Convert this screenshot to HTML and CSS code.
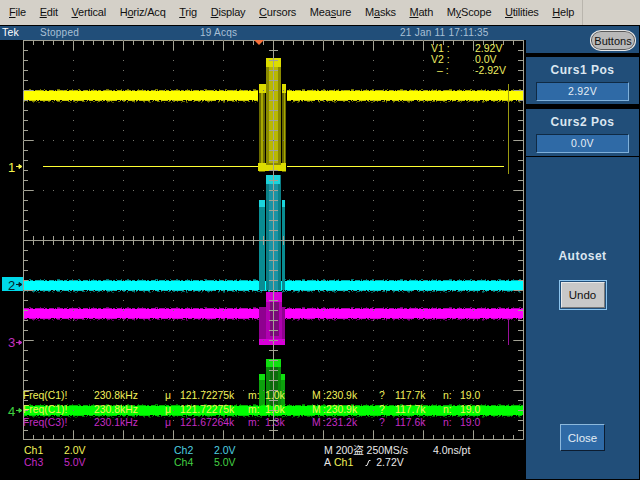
FILE: index.html
```html
<!DOCTYPE html>
<html lang="en">
<head>
<meta charset="utf-8">
<title>Oscilloscope</title>
<link rel="stylesheet" href="styles.css">
</head>
<body>
<nav class="menu">
  <span><u>F</u>ile</span><span><u>E</u>dit</span><span><u>V</u>ertical</span><span>H<u>o</u>riz/Acq</span><span><u>T</u>rig</span><span><u>D</u>isplay</span><span><u>C</u>ursors</span><span>Mea<u>s</u>ure</span><span>M<u>a</u>sks</span><span><u>M</u>ath</span><span>M<u>y</u>Scope</span><span><u>U</u>tilities</span><span><u>H</u>elp</span>
  <i class="menu-sep"></i>
</nav>
<div class="body">
  <main class="left">
    <header class="status">
      <b class="tek">Tek</b><span>Stopped</span><span>19 Acqs</span><span>21 Jan 11 17:11:35</span>
    </header>
    <section class="scope">
      <svg class="plot" width="526" height="400" viewBox="0 40 526 400" xmlns="http://www.w3.org/2000/svg">
        <defs>
          <g id="trace">
            <line class="fz a" x1="23" x2="523" y1="-6.5" y2="-6.5"/>
            <line class="fz b" x1="23" x2="523" y1="-5.5" y2="-5.5"/>
            <rect x="23" y="-5" width="500" height="9" fill="currentColor"/>
            <line class="fz c" x1="23" x2="523" y1="4.5" y2="4.5"/>
            <line class="fz d" x1="23" x2="523" y1="5.5" y2="5.5"/>
            <line class="fz e" x1="23" x2="523" y1="6.5" y2="6.5"/>
          </g>
        </defs>

        <rect class="tr1" x="43" y="166" width="461" height="1"/>
        <use href="#trace" class="c1" y="96"/>
        <rect class="y-black" x="258" y="84" width="29" height="88"/>
        <rect class="y-dim" x="259" y="84" width="6" height="88"/>
        <rect class="y-dim" x="282" y="84" width="4" height="88"/>
        <rect class="y-mid" x="259" y="84" width="7" height="9"/>
        <rect class="y-mid" x="282" y="84" width="4" height="9"/>
        <rect class="y-stripe" x="261" y="93" width="2" height="70"/>
        <rect class="y-stripe" x="284" y="93" width="1" height="70"/>
        <rect class="y-mid" x="258" y="163" width="28" height="8"/>
        <rect class="y-in" x="266" y="58" width="15" height="113"/>
        <rect class="y-mid" x="266" y="58" width="15" height="9"/>
        <rect class="y-core" x="269" y="67" width="9" height="96"/>
        <rect class="y-mid" x="266" y="165" width="15" height="6"/>

        <use href="#trace" class="c2" y="286"/>
        <rect class="c-black" x="259" y="200" width="26" height="81"/>
        <rect class="c-dim" x="259" y="200" width="6" height="90"/>
        <rect class="c-dim" x="282" y="200" width="3" height="90"/>
        <rect class="c-hi" x="259" y="200" width="6" height="7"/>
        <rect class="c-hi" x="282" y="200" width="3" height="7"/>
        <rect class="c-in" x="266" y="175" width="15" height="115"/>
        <rect class="c-hi" x="266" y="175" width="14" height="9"/>
        <rect class="c-core" x="269" y="184" width="9" height="106"/>

        <use href="#trace" class="c3" y="314"/>
        <rect class="m-dim" x="259" y="307" width="26" height="38"/>
        <rect class="m-in" x="266" y="292" width="16" height="53"/>
        <rect class="m-hi" x="266" y="292" width="16" height="10"/>
        <rect class="m-core" x="270" y="302" width="9" height="34"/>
        <rect class="m-hi" x="259" y="339" width="26" height="6"/>

        <rect class="g-dim" x="259" y="374" width="6" height="32"/>
        <rect class="g-dim" x="281" y="374" width="4" height="32"/>
        <rect class="g-hi" x="259" y="374" width="6" height="6"/>
        <rect class="g-hi" x="281" y="374" width="4" height="6"/>
        <rect class="g-in" x="266" y="359" width="15" height="47"/>
        <rect class="g-hi" x="266" y="359" width="15" height="8"/>
        <rect class="g-core" x="270" y="367" width="8" height="39"/>
        <use href="#trace" class="c4" y="411"/>

        <rect class="cur-y" x="508" y="84" width="1" height="90"/>
        <rect class="cur-m" x="508" y="318" width="1" height="27"/>

        <g class="grid">
          <path class="frame" d="M23.5 440V40.5H523.5V439.5H23.5"/>
          <line class="t5" x1="25.5" x2="25.5" y1="40" y2="440"/>
          <line class="t10" x1="28.5" x2="28.5" y1="40" y2="440"/>
          <line class="t5" x1="520.5" x2="520.5" y1="40" y2="440"/>
          <line class="t10" x1="518.5" x2="518.5" y1="40" y2="440"/>
          <line class="t4" x1="23" x2="523" y1="42.5" y2="42.5"/>
          <line class="t10" x1="23" x2="523" y1="45.5" y2="45.5"/>
          <line class="t4" x1="23" x2="523" y1="437.5" y2="437.5"/>
          <line class="t10" x1="23" x2="523" y1="435.5" y2="435.5"/>
          <line class="axis" x1="23" x2="523" y1="240.5" y2="240.5"/>
          <line class="axis" x1="273.5" x2="273.5" y1="40" y2="440"/>
          <line class="t8" x1="23" x2="523" y1="240.5" y2="240.5"/>
          <line class="t8" x1="273.5" x2="273.5" y1="40" y2="440"/>
          <line class="dot" x1="73.5" x2="73.5" y1="40" y2="440"/>
          <line class="dot" x1="123.5" x2="123.5" y1="40" y2="440"/>
          <line class="dot" x1="173.5" x2="173.5" y1="40" y2="440"/>
          <line class="dot" x1="223.5" x2="223.5" y1="40" y2="440"/>
          <line class="dot" x1="323.5" x2="323.5" y1="40" y2="440"/>
          <line class="dot" x1="373.5" x2="373.5" y1="40" y2="440"/>
          <line class="dot" x1="423.5" x2="423.5" y1="40" y2="440"/>
          <line class="dot" x1="473.5" x2="473.5" y1="40" y2="440"/>
          <line class="dot" x1="23" x2="523" y1="90.5" y2="90.5"/>
          <line class="dot" x1="23" x2="523" y1="140.5" y2="140.5"/>
          <line class="dot" x1="23" x2="523" y1="190.5" y2="190.5"/>
          <line class="dot" x1="23" x2="523" y1="290.5" y2="290.5"/>
          <line class="dot" x1="23" x2="523" y1="340.5" y2="340.5"/>
          <line class="dot" x1="23" x2="523" y1="390.5" y2="390.5"/>
        </g>

        <polygon class="trig" points="254,40 264,40 259,45"/>

        <rect class="tag2" x="2" y="277" width="21" height="14"/>
        <text class="lbl l1" x="8" y="172">1</text>
        <text class="lbl l2" x="8" y="290">2</text>
        <text class="lbl l3" x="8" y="347">3</text>
        <text class="lbl l4" x="8" y="416">4</text>
        <path class="l1a" d="M16 166.5H20M19 164.5L22 166.5L19 168.5Z"/>
        <path class="l2a" d="M16 284.5H20M19 282.5L22 284.5L19 286.5Z"/>
        <path class="l3a" d="M16 342.5H20M19 340.5L22 342.5L19 344.5Z"/>
        <path class="l4a" d="M16 410.5H20M19 408.5L22 410.5L19 412.5Z"/>
      </svg>

      <div class="cursors">
        <span>V1 :</span><span>2.92V</span>
        <span>V2 :</span><span>0.0V</span>
        <span class="dash">&#8211; :</span><span class="neg">-2.92V</span>
      </div>

      <div class="meas">
        <div class="row yel"><span>Freq(C1)!</span><span>230.8kHz</span><span>&#956;</span><span>121.72275k</span><span>m:</span><span>1.0k</span><span>M</span><span>:230.9k</span><span>?</span><span>117.7k</span><span>n:</span><span>19.0</span></div>
        <div class="row yel"><span>Freq(C1)!</span><span>230.8kHz</span><span>&#956;</span><span>121.72275k</span><span>m:</span><span>1.0k</span><span>M</span><span>:230.9k</span><span>?</span><span>117.7k</span><span>n:</span><span>19.0</span></div>
        <div class="row mag"><span>Freq(C3)!</span><span>230.1kHz</span><span>&#956;</span><span>121.67264k</span><span>m:</span><span>1.3k</span><span>M</span><span>:231.2k</span><span>?</span><span>117.6k</span><span>n:</span><span>19.0</span></div>
      </div>
    </section>
    <footer class="readout">
      <div class="chans">
        <span class="yel">Ch1</span><span class="yel">2.0V</span><span class="cya">Ch2</span><span class="cya">2.0V</span>
        <span class="mag">Ch3</span><span class="mag">5.0V</span><span class="grn">Ch4</span><span class="grn">5.0V</span>
      </div>
      <div class="time">
        <div class="time-row"><span class="tb">M 200&#30423; 250MS/s</span><span>4.0ns/pt</span></div>
        <div class="trig-row"><span>A</span><span class="yel">Ch1</span>
          <svg class="slope" width="6" height="7" viewBox="0 0 6 7" xmlns="http://www.w3.org/2000/svg"><path d="M0.5 6.5H2L4 1.5H5.5"/></svg>
          <span>2.72V</span></div>
      </div>
    </footer>
  </main>
  <aside class="panel">
    <div class="sec head"><button class="pill">Buttons</button></div>
    <div class="sec cur"><h2>Curs1 Pos</h2><div class="val">2.92V</div></div>
    <div class="sec cur second"><h2>Curs2 Pos</h2><div class="val">0.0V</div></div>
    <div class="sec rest">
      <h2>Autoset</h2>
      <div class="undo-wrap"><button class="undo">Undo</button></div>
      <button class="close">Close</button>
    </div>
  </aside>
</div>
</body>
</html>
```
FILE: styles.css
```css
* { box-sizing: border-box; }
html, body { margin: 0; padding: 0; }
body {
  width: 640px; height: 480px; overflow: hidden; background: #000;
  font-family: "Liberation Sans", Arial, sans-serif; color: #fff;
}
.menu {
  height: 26px; background: #d4d0c8; border-bottom: 1px solid #000;
  display: flex; align-items: center; gap: 13.7px; padding: 0 0 1px 9px;
  color: #111; font-size: 11px; letter-spacing: -.2px; position: relative;
}
.menu-sep { position: absolute; left: 582px; top: 0; bottom: 0; width: 1px; background: #b9b5ad; }
.body { display: flex; height: 454px; }
.left { width: 526px; display: flex; flex-direction: column; }
.status {
  height: 14px; background: #214e79; color: #a9c0d6; font-size: 10px; letter-spacing: .25px;
  display: grid; grid-template-columns: 38px 160px 200px auto; padding-left: 2px; line-height: 13px;
}
.tek { color: #fff; font-weight: normal; font-size: 10.5px; }
.scope { height: 400px; position: relative; }
.plot { display: block; }

.fz { stroke: currentColor; stroke-width: 1; }
.fz.a { stroke-dasharray: 1 5 2 9 1 3 1 12 3 7 1 4; opacity: .45; }
.fz.b { stroke-dasharray: 6 1 3 2 9 1 2 2 5 1 1 1; opacity: .7; }
.fz.c { stroke-dasharray: 4 2 7 1 2 1 11 3 1 1; opacity: .8; }
.fz.d { stroke-dasharray: 2 2 1 4 3 1 1 6 2 3; opacity: .45; }
.fz.e { stroke-dasharray: 1 9 1 4 2 13 1 6; opacity: .3; }
.c1 { color: #ffff00; }
.c2 { color: #00ffff; }
.c3 { color: #ff00ff; }
.c4 { color: #00ff00; }
.tr1 { fill: #ffff33; }
.y-black { fill: #000; }
.y-dim { fill: #6a6a00; }
.y-mid { fill: #dcdc00; }
.y-stripe { fill: #a8a800; }
.y-in { fill: #8a8a00; }
.y-core { fill: #b8b800; }
.c-black { fill: #000; }
.c-dim { fill: #0a8c92; }
.c-hi { fill: #1cd4dc; }
.c-in { fill: #0b7f86; }
.c-core { fill: #1a93a4; }
.m-dim { fill: #8f008f; }
.m-hi { fill: #d800d8; }
.m-in { fill: #b000b0; }
.m-core { fill: #7a0a7a; }
.g-dim { fill: #0ca00c; }
.g-hi { fill: #10e010; }
.g-in { fill: #0a8a0a; }
.g-core { fill: #0c6a0c; }
.cur-y { fill: #9a9a10; }
.cur-m { fill: #9a109a; }

.grid line, .frame { fill: none; stroke: #a3a294; stroke-width: 1; }
.grid .t5 { stroke-width: 5; stroke-dasharray: 1 9; }
.grid .t4 { stroke-width: 5; stroke-dasharray: 1 9; }
.grid .t10 { stroke-width: 10; stroke-dasharray: 1 49; }
.grid .t8 { stroke-width: 9; stroke-dasharray: 1 9; }
.grid .axis { stroke-width: 1; }
.grid .dot { stroke: #75756c; stroke-dasharray: 1 9; }
.trig { fill: #f5703a; }
.tag2 { fill: #00d8e8; }
.lbl { font-size: 13px; font-family: "Liberation Sans", sans-serif; }
.l1 { fill: #f4f44c; }
.l2 { fill: #06222a; }
.l3 { fill: #c030c0; }
.l4 { fill: #3fd03f; }
.l1a { stroke: #f4f44c; fill: #f4f44c; }
.l2a { stroke: #06222a; fill: #06222a; }
.l3a { stroke: #c030c0; fill: #c030c0; }
.l4a { stroke: #3fd03f; fill: #3fd03f; }

.cursors {
  position: absolute; left: 431px; top: 3px;
  display: grid; grid-template-columns: 40px 44px; grid-auto-rows: 11px;
  font-size: 10.5px; line-height: 11px; color: #ecec60;
}
.cursors span:nth-child(even) { padding-left: 4px; }
.cursors .neg { padding-left: 0; }
.cursors .dash { padding-left: 6px; }

.meas { position: absolute; left: 23px; top: 349px; font-size: 10.4px; line-height: 13.5px; }
.row {
  display: grid; height: 13.5px;
  grid-template-columns: 71px 71px 15px 68px 17px 47px 11px 56px 16px 48px 17px 30px;
}
.yel { color: #f2f25a; }
.mag { color: #c42cc4; }
.cya { color: #4fd0e0; }
.grn { color: #44d044; }

.readout { height: 40px; display: flex; font-size: 10.5px; line-height: 12px; padding-top: 4px; }
.chans {
  width: 324px; padding-left: 24px;
  display: grid; grid-template-columns: 40px 110px 40px 110px; grid-auto-rows: 12px;
}
.time { color: #e8e8e8; }
.time-row { display: flex; height: 12px; }
.tb { width: 109px; font-family: "Liberation Sans", "Noto Sans CJK SC", sans-serif; }
.trig-row { display: flex; align-items: center; gap: 3px; height: 12px; }
.slope { margin: 0 2px 0 9px; }
.slope path { fill: none; stroke: #e8e8e8; stroke-width: 1; }

.panel { width: 113px; display: flex; flex-direction: column; color: #dbe6f0; }
.sec { background: #214e79; }
.head { height: 27px; margin-bottom: 4px; padding: 4px 3px 0 0; display: flex; justify-content: flex-end; align-items: flex-start; }
.pill {
  width: 46px; height: 21px; padding: 0; border-radius: 11px / 10px;
  background: #b9b9b9; border: 1px solid #e6e6e6; box-shadow: inset 0 0 0 1px #5a5a5a;
  font: 11px "Liberation Sans", sans-serif; color: #111;
}
.cur { height: 47px; margin-bottom: 5px; padding-top: 6px; }
.cur.second { margin-bottom: 1px; }
h2 { margin: 0; text-align: center; font-size: 12px; line-height: 14px; font-weight: bold; letter-spacing: .5px; color: #dbe6f0; }
.val {
  width: 93px; height: 19px; margin: 5px 0 0 10px;
  background: #2f6aa6; border: 1px solid; border-color: #0f2a44 #7fb0da #7fb0da #0f2a44;
  text-align: center; font-size: 10.5px; line-height: 17px; color: #e4edf5; letter-spacing: .3px;
}
.rest { flex: 1; margin-bottom: 1px; display: flex; flex-direction: column; align-items: center; padding-top: 92px; }
.undo-wrap { margin-top: 17px; border: 1px solid #8cc4ee; padding: 1px; background: #214e79; }
.undo {
  display: block; width: 44px; height: 26px; padding: 0; border: 1px solid #e0e0e0; border-color: #e8e8e8 #777 #777 #e8e8e8;
  background: #c8c8c8; font: 11.5px "Liberation Sans", sans-serif; color: #111;
}
.close {
  margin-top: 114px; width: 45px; height: 27px; padding: 0;
  background: #2f6aa6; border: 1px solid; border-color: #8cb8dc #0c1c30 #0c1c30 #8cb8dc;
  font: 11.5px "Liberation Sans", sans-serif; color: #e4edf5;
}
```
